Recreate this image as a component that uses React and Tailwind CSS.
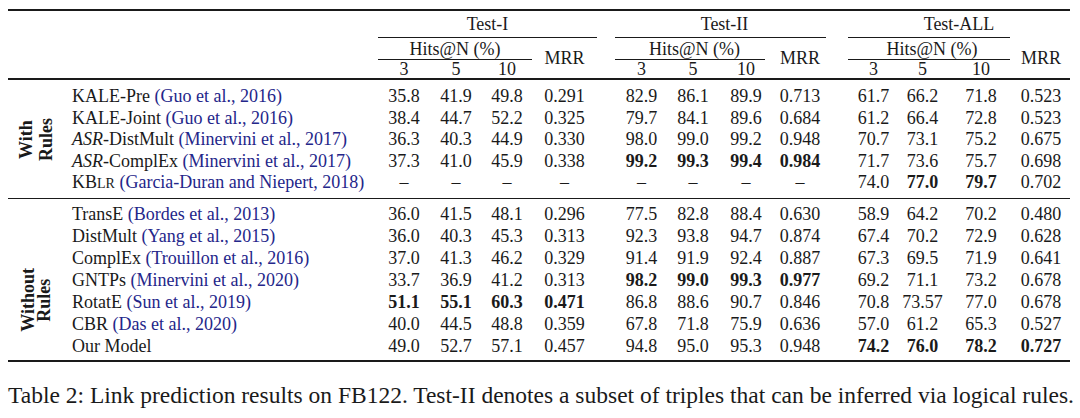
import React from 'react';

const COLS =
  'grid grid-cols-[314px_52px_52px_50px_65px_18px_53px_50px_56px_52px_22px_51px_47px_70px_54px]';

const withRules = [
  [<>KALE-Pre <Cite>(Guo et al., 2016)</Cite></>, ['35.8', '41.9', '49.8', '0.291'], ['82.9', '86.1', '89.9', '0.713'], ['61.7', '66.2', '71.8', '0.523']],
  [<>KALE-Joint <Cite>(Guo et al., 2016)</Cite></>, ['38.4', '44.7', '52.2', '0.325'], ['79.7', '84.1', '89.6', '0.684'], ['61.2', '66.4', '72.8', '0.523']],
  [<><i>ASR</i>-DistMult <Cite>(Minervini et al., 2017)</Cite></>, ['36.3', '40.3', '44.9', '0.330'], ['98.0', '99.0', '99.2', '0.948'], ['70.7', '73.1', '75.2', '0.675']],
  [<><i>ASR</i>-ComplEx <Cite>(Minervini et al., 2017)</Cite></>, ['37.3', '41.0', '45.9', '0.338'], ['*99.2', '*99.3', '*99.4', '*0.984'], ['71.7', '73.6', '75.7', '0.698']],
  [<>KB<span className="text-[14px]">LR</span> <Cite>(Garcia-Duran and Niepert, 2018)</Cite></>, ['–', '–', '–', '–'], ['–', '–', '–', '–'], ['74.0', '*77.0', '*79.7', '0.702']],
];

const withoutRules = [
  [<>TransE <Cite>(Bordes et al., 2013)</Cite></>, ['36.0', '41.5', '48.1', '0.296'], ['77.5', '82.8', '88.4', '0.630'], ['58.9', '64.2', '70.2', '0.480']],
  [<>DistMult <Cite>(Yang et al., 2015)</Cite></>, ['36.0', '40.3', '45.3', '0.313'], ['92.3', '93.8', '94.7', '0.874'], ['67.4', '70.2', '72.9', '0.628']],
  [<>ComplEx <Cite>(Trouillon et al., 2016)</Cite></>, ['37.0', '41.3', '46.2', '0.329'], ['91.4', '91.9', '92.4', '0.887'], ['67.3', '69.5', '71.9', '0.641']],
  [<>GNTPs <Cite>(Minervini et al., 2020)</Cite></>, ['33.7', '36.9', '41.2', '0.313'], ['*98.2', '*99.0', '*99.3', '*0.977'], ['69.2', '71.1', '73.2', '0.678']],
  [<>RotatE <Cite>(Sun et al., 2019)</Cite></>, ['*51.1', '*55.1', '*60.3', '*0.471'], ['86.8', '88.6', '90.7', '0.846'], ['70.8', '73.57', '77.0', '0.678']],
  [<>CBR <Cite>(Das et al., 2020)</Cite></>, ['40.0', '44.5', '48.8', '0.359'], ['67.8', '71.8', '75.9', '0.636'], ['57.0', '61.2', '65.3', '0.527']],
  [<>Our Model</>, ['49.0', '52.7', '57.1', '0.457'], ['94.8', '95.0', '95.3', '0.948'], ['*74.2', '*76.0', '*78.2', '*0.727']],
];

function Cite({ children }) {
  return <span className="text-[#24268a]">{children}</span>;
}

function Val({ v, last }) {
  const bold = v.startsWith('*');
  return (
    <div className={`text-center ${bold ? 'font-bold' : ''} ${last ? 'pr-[4px]' : ''}`}>
      {bold ? v.slice(1) : v}
    </div>
  );
}

function Row({ row, h }) {
  const [name, t1, t2, ta] = row;
  return (
    <div className={`${COLS} ${h}`}>
      <div className="pl-[8px] whitespace-nowrap">{name}</div>
      {t1.map((v, i) => <Val key={'a' + i} v={v} />)}
      <div />
      {t2.map((v, i) => <Val key={'b' + i} v={v} />)}
      <div />
      {ta.map((v, i) => <Val key={'c' + i} v={v} last={i === 3} />)}
    </div>
  );
}

function Group({ label, rows, h, labelClass, className }) {
  return (
    <div className={`flex ${className}`}>
      <div className={`w-[56px] flex items-center justify-center ${labelClass}`}>
        <div className="[writing-mode:vertical-rl] rotate-180 text-center font-bold">
          {label[0]}
          <br />
          {label[1]}
        </div>
      </div>
      <div className="flex flex-col">
        {rows.map((r, i) => <Row key={i} row={r} h={h} />)}
      </div>
    </div>
  );
}

export default function App() {
  return (
    <div className="bg-white w-[1080px] h-[418px] pt-[9px] px-[8px] text-[#1a1a1a] text-[18px] font-['Liberation_Serif',serif]">
      <div className="w-[1062px]">
        {/* top rule */}
        <div className="h-[2px] bg-[#1a1a1a]" />

        {/* header */}
        <div className="grid grid-cols-[56px_314px_52px_52px_50px_65px_18px_53px_50px_56px_52px_22px_51px_47px_70px_54px] grid-rows-[27px_22px_18px] leading-none">
          <div className="col-start-3 col-span-4 row-start-1 flex flex-col">
            <div className="flex-1 flex items-center justify-center">Test-I</div>
            <div className="h-px bg-[#1a1a1a]" />
          </div>
          <div className="col-start-8 col-span-4 row-start-1 flex flex-col">
            <div className="flex-1 flex items-center justify-center pl-[8px]">Test-II</div>
            <div className="h-px bg-[#1a1a1a]" />
          </div>
          <div className="col-start-13 col-span-4 row-start-1 flex flex-col">
            <div className="flex-1 flex items-center justify-center">Test-ALL</div>
            <div className="h-px bg-[#1a1a1a] mr-[60px]" />
          </div>

          <div className="col-start-3 col-span-3 row-start-2 flex flex-col">
            <div className="flex-1 flex items-center justify-center">Hits@N (%)</div>
            <div className="h-px bg-[#1a1a1a]" />
          </div>
          <div className="col-start-6 row-start-2 row-span-2 flex items-center justify-center">MRR</div>

          <div className="col-start-8 col-span-3 row-start-2 flex flex-col">
            <div className="flex-1 flex items-center justify-center">Hits@N (%)</div>
            <div className="h-px bg-[#1a1a1a] mr-[9px]" />
          </div>
          <div className="col-start-11 row-start-2 row-span-2 flex items-center justify-center">MRR</div>

          <div className="col-start-13 col-span-3 row-start-2 flex flex-col">
            <div className="flex-1 flex items-center justify-center">Hits@N (%)</div>
            <div className="h-px bg-[#1a1a1a] mr-[6px]" />
          </div>
          <div className="col-start-16 row-start-2 row-span-2 flex items-center justify-center pr-[4px]">MRR</div>

          <div className="col-start-3 row-start-3 flex items-center justify-center">3</div>
          <div className="col-start-4 row-start-3 flex items-center justify-center">5</div>
          <div className="col-start-5 row-start-3 flex items-center justify-center">10</div>
          <div className="col-start-8 row-start-3 flex items-center justify-center">3</div>
          <div className="col-start-9 row-start-3 flex items-center justify-center">5</div>
          <div className="col-start-10 row-start-3 flex items-center justify-center">10</div>
          <div className="col-start-13 row-start-3 flex items-center justify-center">3</div>
          <div className="col-start-14 row-start-3 flex items-center justify-center">5</div>
          <div className="col-start-15 row-start-3 flex items-center justify-center">10</div>
        </div>

        <div className="h-[2px] bg-[#1a1a1a]" />

        <Group
          label={['With', 'Rules']}
          rows={withRules}
          h="h-[21.6px] leading-[21.6px]"
          labelClass="leading-[20px]"
          className="pt-[6px] pb-[4px]"
        />

        <div className="h-px bg-[#1a1a1a]" />

        <Group
          label={['Without', 'Rules']}
          rows={withoutRules}
          h="h-[22px] leading-[22px]"
          labelClass="leading-[16px] pt-[40px]"
          className="pt-[4px] pb-[3px]"
        />

        <div className="h-[2px] bg-[#1a1a1a]" />
      </div>

      <p className="mt-[20px] text-[23.5px] leading-[27px] whitespace-nowrap">
        Table 2: Link prediction results on FB122. Test-II denotes a subset of triples that can be inferred via logical rules.
      </p>
    </div>
  );
}
